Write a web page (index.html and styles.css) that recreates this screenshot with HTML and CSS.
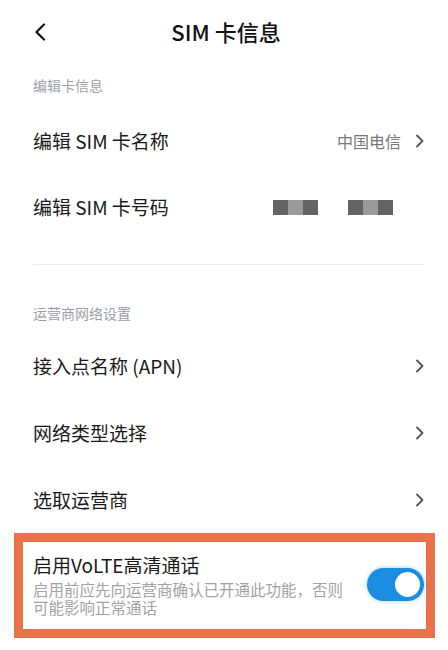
FILE: index.html
```html
<!DOCTYPE html>
<html lang="zh-CN">
<head>
<meta charset="utf-8">
<title>SIM 卡信息</title>
<link rel="stylesheet" href="styles.css">
</head>
<body>
<div class="page">
  <header class="header">
    <svg class="back" width="12" height="18" viewBox="0 0 12 18"><path d="M10 1.5 L2.5 9 L10 16.5" fill="none" stroke="#111" stroke-width="2.2" stroke-linecap="round" stroke-linejoin="round"/></svg>
    <h1 class="title">SIM 卡信息</h1>
  </header>

  <div class="label first">编辑卡信息</div>
  <div class="row">
    <span class="row-text">编辑 SIM 卡名称</span>
    <span class="row-right"><span class="value">中国电信</span><svg class="chev" width="10" height="14" viewBox="0 0 10 14"><path d="M2 1.5 L7.5 7 L2 12.5" fill="none" stroke="#555" stroke-width="1.8" stroke-linecap="round" stroke-linejoin="round"/></svg></span>
  </div>
  <div class="row">
    <span class="row-text">编辑 SIM 卡号码</span>
    <span class="masks">
      <span class="mask"><i class="d"></i><i class="l"></i><i class="d"></i></span>
      <span class="mask"><i class="d"></i><i class="l"></i><i class="d"></i></span>
    </span>
  </div>
  <div class="divider"></div>

  <div class="label second">运营商网络设置</div>
  <div class="row tall">
    <span class="row-text">接入点名称 (APN)</span>
    <svg class="chev" width="10" height="14" viewBox="0 0 10 14"><path d="M2 1.5 L7.5 7 L2 12.5" fill="none" stroke="#555" stroke-width="1.8" stroke-linecap="round" stroke-linejoin="round"/></svg>
  </div>
  <div class="row tall">
    <span class="row-text">网络类型选择</span>
    <svg class="chev" width="10" height="14" viewBox="0 0 10 14"><path d="M2 1.5 L7.5 7 L2 12.5" fill="none" stroke="#555" stroke-width="1.8" stroke-linecap="round" stroke-linejoin="round"/></svg>
  </div>
  <div class="row tall">
    <span class="row-text">选取运营商</span>
    <svg class="chev" width="10" height="14" viewBox="0 0 10 14"><path d="M2 1.5 L7.5 7 L2 12.5" fill="none" stroke="#555" stroke-width="1.8" stroke-linecap="round" stroke-linejoin="round"/></svg>
  </div>

  <div class="volte">
    <div class="volte-text">
      <div class="volte-title">启用VoLTE高清通话</div>
      <div class="volte-sub">启用前应先向运营商确认已开通此功能，否则可能影响正常通话</div>
    </div>
    <div class="toggle"><span class="knob"></span></div>
  </div>
</div>
</body>
</html>
```

FILE: styles.css
```css
* { box-sizing: border-box; }
html, body { margin: 0; padding: 0; background: #fff; }
body {
  font-family: "Noto Sans CJK SC", "Noto Sans", sans-serif;
  color: #1a1a1a;
}
.page { width: 448px; }

.header {
  position: relative;
  height: 62px;
  display: flex;
  align-items: center;
  justify-content: center;
}
.back { position: absolute; left: 34px; top: 23px; }
.title {
  margin: 0;
  font-size: 22px;
  font-weight: 500;
  color: #111;
  line-height: 30px;
  padding-left: 4px;
}

.label {
  font-size: 14px;
  line-height: 20px;
  color: #9b9fab;
  padding-left: 33px;
}
.label.first { padding-top: 13px; height: 46px; }
.label.second { padding-top: 38px; height: 67px; }

.row {
  height: 66px;
  display: flex;
  align-items: center;
  justify-content: space-between;
  padding: 0 24px 0 33px;
}
.row.tall { height: 67px; }
.row-text { font-size: 19px; line-height: 26px; color: #1a1a1a; }
.row-right { display: flex; align-items: center; gap: 14px; }
.value { font-size: 16px; color: #777; line-height: 22px; }
.chev { display: block; margin-right: -1px; }

.masks { display: flex; gap: 30px; margin-right: 31px; margin-top: 1px; }
.mask { display: flex; }
.mask i { display: block; width: 15px; height: 15px; }
.mask i.d { background: #646464; }
.mask i.l { background: #9a9a9a; }

.divider {
  margin: 24px 24px 0 33px;
  height: 1px;
  background: #ebebeb;
}

.volte {
  margin: 0 13px 0 14px;
  height: 105px;
  border: 9px solid #e8734a;
  display: flex;
  align-items: flex-start;
  justify-content: space-between;
  padding: 11px 2px 0 10px;
}
.volte-text { width: 318px; }
.volte-title { font-size: 19px; line-height: 24px; color: #1a1a1a; }
.volte-sub {
  margin-top: 3px;
  font-size: 15.5px;
  line-height: 18px;
  color: #a3a3a3;
}
.toggle {
  margin-top: 15px;
  width: 57px;
  height: 33px;
  border-radius: 17px;
  background: #1b8de0;
  box-shadow: 0 0 4px rgba(27, 141, 224, 0.45);
  position: relative;
}
.knob {
  position: absolute;
  right: 4px;
  top: 4px;
  width: 25px;
  height: 25px;
  border-radius: 50%;
  background: #fff;
}
```
